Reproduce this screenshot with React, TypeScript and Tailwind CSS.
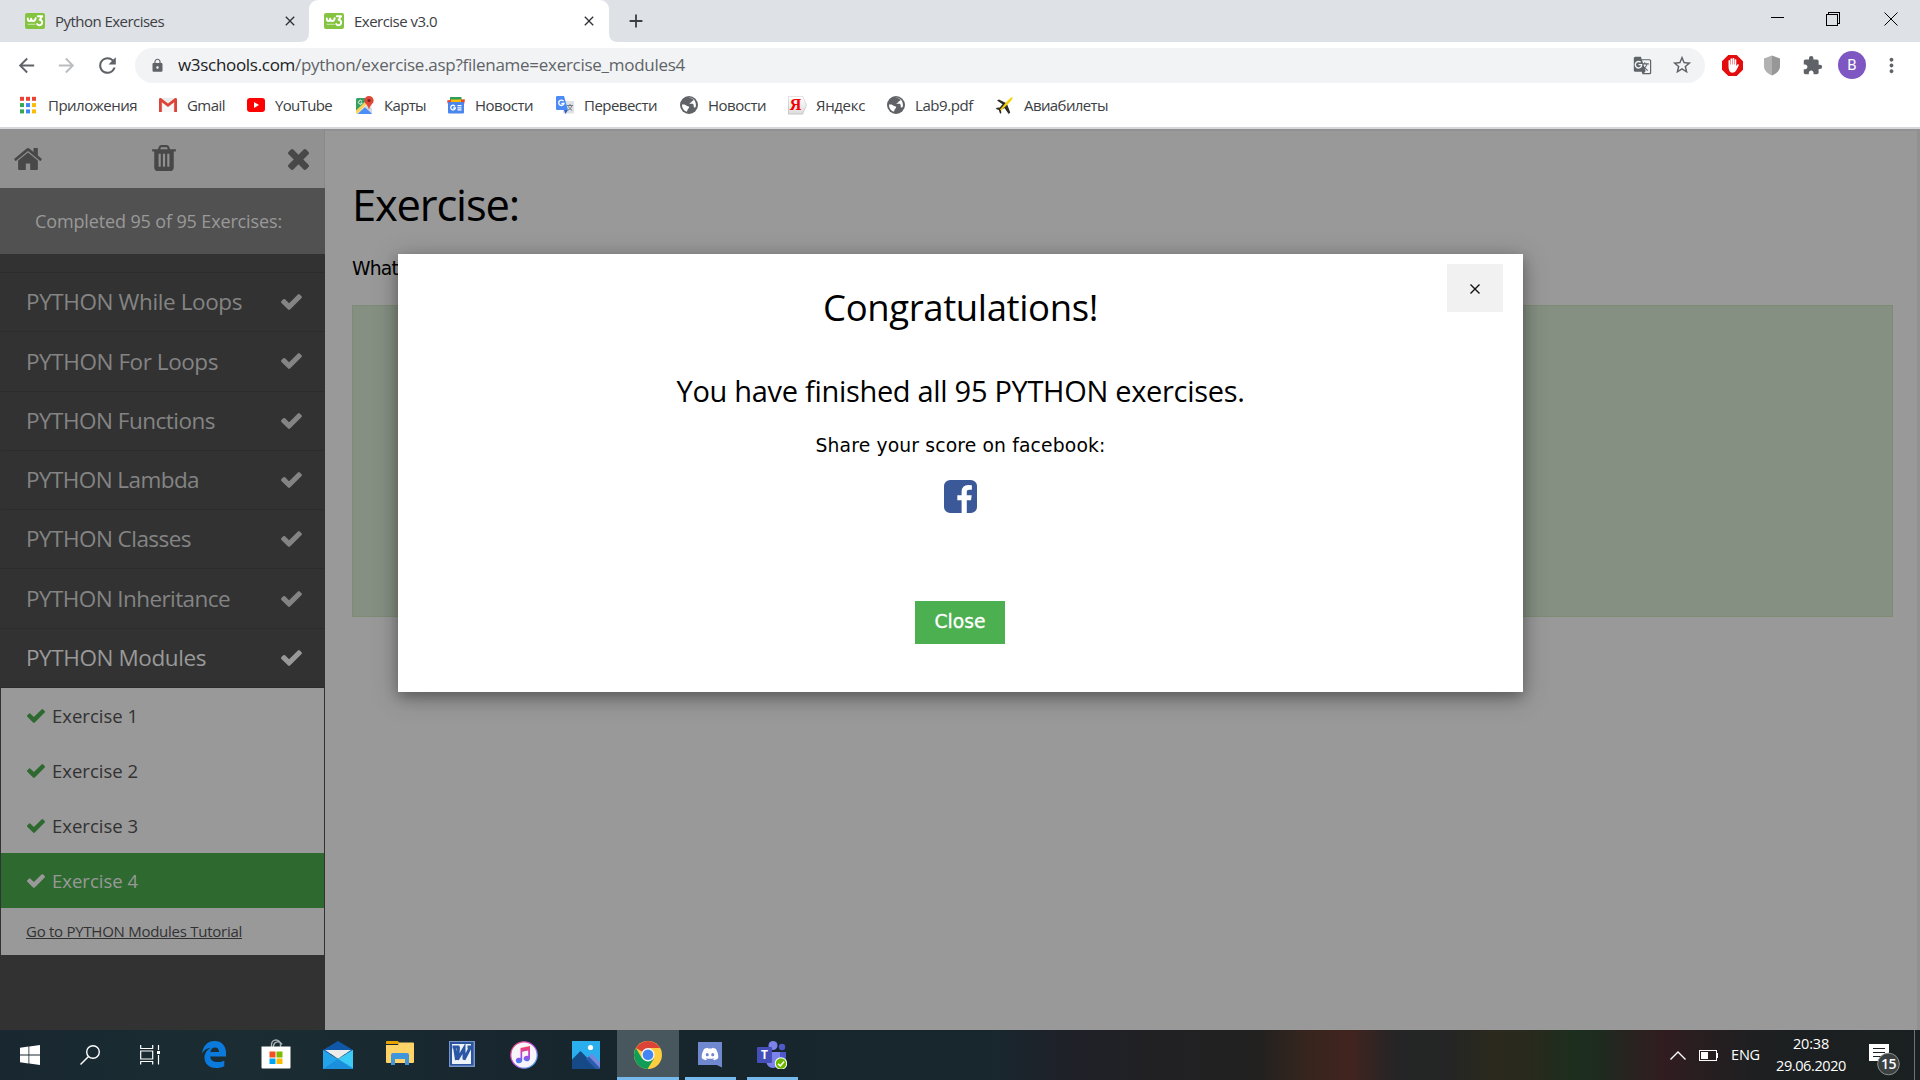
import { useLayoutEffect, useRef, useState, type ReactNode } from "react";
import {
  MdAdd,
  MdArrowBack,
  MdArrowForward,
  MdClose,
  MdExtension,
  MdGTranslate,
  MdLock,
  MdMoreVert,
  MdRefresh,
  MdStarBorder,
} from "react-icons/md";
import { FaDiscord } from "react-icons/fa";

/** One line of text whose letter spacing is adjusted so that it fills `width` pixels. */
function Line({ text, width, className = "" }: { text: string; width: number; className?: string }) {
  const ref = useRef<HTMLSpanElement>(null);
  const [spacing, setSpacing] = useState(0);
  useLayoutEffect(() => {
    if (ref.current) {
      setSpacing((width - ref.current.getBoundingClientRect().width) / text.length);
    }
  }, [text, width]);
  return (
    <span ref={ref} className={`inline-block shrink-0 whitespace-pre ${className}`} style={{ letterSpacing: `${spacing}px` }}>
      {text}
    </span>
  );
}

/* ---------- Glyphs ---------- */

const CheckIcon = ({ className }: { className: string }) => (
  <svg viewBox="121 334 1550 1188" className={className} fill="currentColor">
    <path d="M1671 566q0 40-28 68l-724 724-136 136q-28 28-68 28t-68-28l-136-136-362-362q-28-28-28-68t28-68l136-136q28-28 68-28t68 28l294 295 656-657q28-28 68-28t68 28l136 136q28 28 28 68z" />
  </svg>
);

const HomeIcon = () => (
  <svg viewBox="89 253 1614 1283" className="h-[22px] w-7" fill="currentColor">
    <path d="M1472 992v480q0 26-19 45t-45 19h-384v-384h-256v384h-384q-26 0-45-19t-19-45v-480q0-1 .5-3t.5-3l575-474 575 474q1 2 1 6zm223-69l-62 74q-8 9-21 11h-3q-13 0-21-7l-692-577-692 577q-12 8-24 7-13-2-21-11l-62-74q-8-10-7-23.500t11-21.500l719-599q32-26 76-26t76 26l244 204v-195q0-14 9-23t23-9h192q14 0 23 9t9 23v408l219 182q10 8 11 21.500t-7 23.500z" />
  </svg>
);

const TrashIcon = () => (
  <svg viewBox="192 128 1408 1536" className="mr-[3px] mb-0.5 h-[26px] w-6" fill="currentColor">
    <path d="M704 1376v-704q0-14-9-23t-23-9h-64q-14 0-23 9t-9 23v704q0 14 9 23t23 9h64q14 0 23-9t9-23zm256 0v-704q0-14-9-23t-23-9h-64q-14 0-23 9t-9 23v704q0 14 9 23t23 9h64q14 0 23-9t9-23zm256 0v-704q0-14-9-23t-23-9h-64q-14 0-23 9t-9 23v704q0 14 9 23t23 9h64q14 0 23-9t9-23zm-544-992h448l-48-117q-7-9-17-11h-317q-10 2-17 11zm928 32v64q0 14-9 23t-23 9h-96v948q0 83-47 143.500t-113 60.500h-832q-66 0-113-58.500t-47-141.500v-952h-96q-14 0-23-9t-9-23v-64q0-14 9-23t23-9h309l70-167q15-37 54-63t79-26h320q40 0 79 26t54 63l70 167h309q14 0 23 9t9 23z" />
  </svg>
);

const TimesIcon = () => (
  <svg viewBox="302 366 1188 1188" className="mt-px h-[21px] w-[21px]" fill="currentColor">
    <path d="M1490 1322q0 40-28 68l-136 136q-28 28-68 28t-68-28l-294-294-294 294q-28 28-68 28t-68-28l-136-136q-28-28-28-68t28-68l294-294-294-294q-28-28-28-68t28-68l136-136q28-28 68-28t68 28l294 294 294-294q28-28 68-28t68 28l136 136q28 28 28 68t-28 68l-294 294 294 294q28 28 28 68z" />
  </svg>
);

const FacebookIcon = () => (
  <svg viewBox="128 128 1536 1536" className="h-[33px] w-[33px] text-[#3b5998]" fill="currentColor">
    <path d="M1376 128q119 0 203.500 84.500t84.500 203.500v960q0 119-84.500 203.500t-203.500 84.500h-188v-595h199l30-232h-229v-148q0-56 23.500-84t91.500-28l122-1v-207q-63-9-178-9-136 0-217.500 80t-81.500 226v171h-200v232h200v595h-532q-119 0-203.500-84.500t-84.500-203.500v-960q0-119 84.500-203.500t203.500-84.500h960z" />
  </svg>
);

const W3Favicon = () => (
  <div className="relative h-4 w-5 shrink-0 overflow-hidden rounded-[2px] bg-[#85c440] text-white">
    <svg viewBox="0 0 20 16" className="h-4 w-5" fill="none" stroke="currentColor" strokeWidth="1.9" strokeLinecap="round" strokeLinejoin="round">
      <path d="M2.800 5.500c0 3.400 2.800 3.400 3.300.2.300 3.200 4 3.200 4.600-.6M12.800 3.200h4.400l-2.600 3.600c3.500 0 3.500 5.800-.6 5.400-.9-.1-1.500-.5-1.800-1.100" />
      <path d="M3 11.300h7" strokeWidth="1" opacity="0.600" />
    </svg>
  </div>
);

/* ---------- Bookmark icons ---------- */

const AppsIcon = () => (
  <svg viewBox="0 0 18 18" className="h-[18px] w-[18px]">
    {["#ea4335", "#ea4335", "#ea4335", "#34a853", "#4285f4", "#fbbc05", "#34a853", "#4285f4", "#fbbc05"].map((c, i) => (
      <rect key={i} x={(i % 3) * 6} y={0.800 + Math.floor(i / 3) * 6.300} width="4" height="4" fill={c} />
    ))}
  </svg>
);

const GmailIcon = () => (
  <svg viewBox="0 0 18 14" className="h-3.5 w-[18px]">
    <rect width="18" height="14" rx="1" fill="#ececec" />
    <path d="M3 14V3l6 5 6-5v11" fill="#f7f7f7" stroke="#d0d0d0" strokeWidth=".4" />
    <path d="M0 14V1.500C0 0 1.600-.4 2.500.4L9 5.600 15.500.4C16.400-.4 18 0 18 1.500V14h-2.800V4.300L9 9 2.800 4.300V14z" fill="#db4437" />
  </svg>
);

const YouTubeIcon = () => (
  <svg viewBox="0 0 18 14" className="h-3.5 w-[18px]">
    <rect width="18" height="14" rx="3" fill="#f00" />
    <path d="M7 4l5 3-5 3z" fill="#fff" />
  </svg>
);

const MapsIcon = () => (
  <svg viewBox="0 0 18 18" className="h-[18px] w-[18px]">
    <rect x="0" y="2" width="16" height="16" rx="1.500" fill="#f1f1f1" />
    <path d="M0 3.500Q0 2 1.500 2H14L0 15.500z" fill="#34a062" />
    <path d="M2 17.500L9 11l7 6.500q-.5.500-1.500.500h-13z" fill="#4c8df6" />
    <path d="M0 14.500L12 3l2.500 1L1.500 17.800Q0 17.500 0 16z" fill="#fcd25a" />
    <path d="M9 11l2.500-2.500L16 13v4.500z" fill="#d5d8dc" />
    <path d="M13 0a4.600 4.600 0 0 1 4.600 4.600c0 3.400-3.500 4-4.300 8.400h-.6C12 8.600 8.400 8 8.400 4.600A4.600 4.600 0 0 1 13 0z" fill="#e14638" />
    <circle cx="13" cy="4.500" r="1.600" fill="#7b2019" />
    <path d="M6 5.300A1.900 1.900 0 1 0 6.200 7H4.600" fill="none" stroke="#fff" strokeWidth=".9" />
  </svg>
);

const NewsIcon = () => (
  <svg viewBox="0 0 18 18" className="h-[18px] w-[18px]">
    <path d="M3 1h11.500v7H3z" fill="#2e9e58" />
    <path d="M0 4.500l6-1 2 5H1z" fill="#e94435" />
    <path d="M4 3.500h13.500l-1 6H4z" fill="#fbbc05" />
    <path d="M14 3.500h4l-1 5h-3z" fill="#e94435" />
    <rect x="1" y="6" width="16" height="11.500" rx="1.200" fill="#4a86ee" />
    <path d="M8 10.300A2.300 2.300 0 1 0 8.300 12H6.200M10.500 9.700h4M10.500 11.800h4M10.500 13.900h4" fill="none" stroke="#fff" strokeWidth="1.300" />
  </svg>
);

const TranslateIcon = () => (
  <svg viewBox="0 0 18 18" className="h-[18px] w-[18px]">
    <rect x="7" y="5" width="11" height="12.500" rx="1" fill="#dfe1e5" />
    <path d="M11 9.500h6M14 8v1.500M16 9.500c-.5 2-2 3.600-4 4.600M12.500 10.500c.7 1.600 2 3 3.700 3.800" stroke="#6f7a83" strokeWidth="1" fill="none" />
    <path d="M1.200 0H8l4 14H1.200Q0 14 0 12.800V1.200Q0 0 1.200 0z" fill="#4c8bf5" />
    <path d="M8 14h4l-2.600 4z" fill="#2f5fc4" />
    <path d="M7.600 5.200A2.700 2.700 0 1 0 8 7.500H5.400" fill="none" stroke="#fff" strokeWidth="1.300" />
  </svg>
);

const GlobeIcon = () => (
  <svg viewBox="0 0 18 18" className="h-[18px] w-[18px]">
    <circle cx="9" cy="9" r="9" fill="#5f6368" />
    <path d="M2 8.500c2.500-.3 4 .3 5 1.500 1.300.2 2.600.5 2 2-.8.700-1.500 1-1.500 2.300-.3 1-.9 1.500-1.500 1.300C3.200 14 1.800 11.500 2 8.500z" fill="#fff" />
    <path d="M7 2.500c2.500-1 5-.4 6.500 1.200.3 1.300-1.500 1-2 2-.3 1.200-1.700.8-2 1.800.8.900 3-.3 4 .9.400 1.200-.1 2.200.6 3 .8.500 1.600-.2 1.800-1.400.4-3.500-1.500-7-4.400-8C9.500 1.500 8 1.700 7 2.500z" fill="#fff" />
  </svg>
);

const YandexIcon = () => (
  <div className="flex h-[19px] w-[19px] items-center justify-center bg-[linear-gradient(#e4e4e4,#c4c4c4)] [clip-path:polygon(0_0,78%_0,100%_50%,78%_100%,0_100%)]">
    <div className="flex h-[17px] w-[17px] items-center justify-center bg-[linear-gradient(#ffffff,#dcdcdc)] pr-1 font-['Liberation_Serif',serif] text-[16px] leading-none font-bold text-[#f00000] [clip-path:polygon(0_0,78%_0,100%_50%,78%_100%,0_100%)]">
      Я
    </div>
  </div>
);

const PlaneIcon = () => (
  <svg viewBox="0 0 17 17" className="h-[17px] w-[17px]">
    <path d="M1 3.500l2-1 6.500 3.300 1.700 1.700 3 8-1.500 1.500L8.500 11 5 13l.3 3-1.200.8L2.800 13 0 12l.6-1.200 3.200-.3 2.700-3.300z" fill="#2d2b25" />
    <path d="M16.500.3c.6.900-.6 2.800-3.700 6L5.200 13.500l-1.400-.8 6.900-7.900C13.400 1.600 15.600-.4 16.500.3z" fill="#f6d20c" />
  </svg>
);

/* ---------- Browser chrome ---------- */

function TabStrip() {
  return (
    <div className="flex h-[42px] items-center bg-[#dee1e6] text-[#3c4043]">
      <div className="flex h-full w-[309px] items-center pl-[25px]">
        <W3Favicon />
        <Line text="Python Exercises" width={109} className="ml-2.5 text-[15px]" />
        <MdClose className="ml-[118px] h-4 w-4 text-[#303235]" />
      </div>
      <div className="relative flex h-full w-[300px] items-center rounded-t-[9px] bg-white pl-[15px]">
        <svg viewBox="0 0 9 9" className="absolute bottom-0 -left-[9px] h-[9px] w-[9px]">
          <path d="M9 0v9H0Q9 9 9 0z" fill="#fff" />
        </svg>
        <W3Favicon />
        <Line text="Exercise v3.0" width={83} className="ml-2.5 text-[15px]" />
        <MdClose className="ml-[144px] h-4 w-4 text-[#303235]" />
        <svg viewBox="0 0 9 9" className="absolute -right-[9px] bottom-0 h-[9px] w-[9px]">
          <path d="M0 0v9h9Q0 9 0 0z" fill="#fff" />
        </svg>
      </div>
      <MdAdd className="ml-4 h-[22px] w-[22px] text-[#3c4043]" />
      <div className="ml-auto flex items-center text-black">
        <svg viewBox="0 0 14 14" className="mb-2.5 h-3.5 w-3.5" stroke="currentColor" fill="none" shapeRendering="crispEdges">
          <path d="M.5 8.500h13" />
        </svg>
        <svg viewBox="0 0 14 14" className="mb-1 ml-[42px] h-3.5 w-3.5" stroke="currentColor" fill="none" shapeRendering="crispEdges">
          <path d="M.5 2.500h10.500v11H.5zM2.500 2.500V.5h11v10.500h-2.500" />
        </svg>
        <svg viewBox="0 0 14 14" className="mr-[22px] mb-1 ml-11 h-3.5 w-3.5" stroke="currentColor" fill="none">
          <path d="M.5.5l13 13M13.500.5L.5 13.500" />
        </svg>
      </div>
    </div>
  );
}

function Toolbar() {
  return (
    <div className="flex h-[46px] items-center bg-white text-[#5f6368]">
      <MdArrowBack className="ml-[15px] h-[23px] w-[23px]" />
      <MdArrowForward className="ml-[17px] h-[23px] w-[23px] text-[#bbbdbf]" />
      <MdRefresh className="ml-[17px] h-[25px] w-[25px]" />
      <div className="ml-[15px] flex h-[35px] w-[1570px] items-center rounded-full bg-[#f1f3f4]">
        <MdLock className="ml-[15px] h-[15px] w-[15px]" />
        <Line text="w3schools.com" width={117} className="ml-[13px] text-[17px] text-[#202124]" />
        <Line text="/python/exercise.asp?filename=exercise_modules4" width={390} className="text-[17px]" />
        <MdGTranslate className="ml-auto h-[19px] w-[19px]" />
        <MdStarBorder className="mr-3 ml-[19px] h-[22px] w-[22px]" />
      </div>
      <svg viewBox="0 0 20 20" className="ml-[17px] h-[21px] w-[21px]">
        <path d="M6 0h8l6 6v8l-6 6H6l-6-6V6z" fill="#e30d0d" />
        <path d="M6.200 11V5.200q.8-.8 1.500 0V9h.4V3.600q.8-.9 1.600 0V9h.4V3.200q.9-.8 1.600 0V9h.4V4.400q.8-.7 1.500 0v6l1.200-1.500q1-.4 1.300.6-1.500 3.600-2.900 5.800-1.200 1.500-3.500 1.500-3.500-.2-3.500-5.800z" fill="#fff" />
      </svg>
      <svg viewBox="0 0 16 20" className="ml-[21px] h-[21px] w-4">
        <path d="M8 0L0 3v8c0 4 4 7.500 8 9z" fill="#b1b1b1" />
        <path d="M8 0l8 3v8c0 4-4 7.500-8 9z" fill="#979797" />
      </svg>
      <MdExtension className="ml-[22px] h-[21px] w-[21px]" />
      <div className="ml-[15px] flex h-7 w-7 items-center justify-center rounded-full bg-[#7e57c2] font-['Roboto',sans-serif] text-[15px] text-white">
        B
      </div>
      <MdMoreVert className="ml-[14px] h-[23px] w-[23px]" />
    </div>
  );
}

const bookmarks: { icon: ReactNode; label: string; width: number; cell: string }[] = [
  { icon: <AppsIcon />, label: "Приложения", width: 89, cell: "w-[139px]" },
  { icon: <GmailIcon />, label: "Gmail", width: 38, cell: "w-[88px]" },
  { icon: <YouTubeIcon />, label: "YouTube", width: 57, cell: "w-[109px]" },
  { icon: <MapsIcon />, label: "Карты", width: 42, cell: "w-[91px]" },
  { icon: <NewsIcon />, label: "Новости", width: 58, cell: "w-[109px]" },
  { icon: <TranslateIcon />, label: "Перевести", width: 73, cell: "w-[124px]" },
  { icon: <GlobeIcon />, label: "Новости", width: 58, cell: "w-[108px]" },
  { icon: <YandexIcon />, label: "Яндекс", width: 49, cell: "w-[99px]" },
  { icon: <GlobeIcon />, label: "Lab9.pdf", width: 58, cell: "w-[109px]" },
  { icon: <PlaneIcon />, label: "Авиабилеты", width: 84, cell: "w-[120px]" },
];

function BookmarksBar() {
  return (
    <div className="flex h-[41px] items-center border-b-2 border-[#d5d7da] bg-white pb-[5px] pl-5 text-[#3c4043]">
      {bookmarks.map((b, i) => (
        <div key={i} className={`flex shrink-0 items-center ${b.cell}`}>
          <div className="flex w-7 shrink-0">{b.icon}</div>
          <Line text={b.label} width={b.width} className="text-[15px] leading-5" />
        </div>
      ))}
    </div>
  );
}

/* ---------- Page ---------- */

const chapters = [
  { name: "PYTHON While Loops", width: 216 },
  { name: "PYTHON For Loops", width: 192 },
  { name: "PYTHON Functions", width: 189 },
  { name: "PYTHON Lambda", width: 173 },
  { name: "PYTHON Classes", width: 165 },
  { name: "PYTHON Inheritance", width: 204 },
  { name: "PYTHON Modules", width: 180, open: true },
];

function Sidebar() {
  return (
    <aside className="flex w-[325px] shrink-0 flex-col bg-[#323232]">
      <div className="flex h-[59px] items-center justify-between border-r border-[#8a8a8a] bg-[#919191] pr-[15px] pl-3.5 text-[#484848]">
        <HomeIcon />
        <TrashIcon />
        <TimesIcon />
      </div>
      <div className="flex h-[66px] items-center bg-[#515151] pl-[35px] text-[#999]">
        <Line text="Completed 95 of 95 Exercises:" width={247} className="text-[18px]" />
      </div>
      <div className="mx-px h-[19px] border-b border-[#2c2c2c]" />
      <ul className="mx-px h-[415px]">
        {chapters.map((c) => (
          <li
            key={c.name}
            className={`flex h-[59.286px] items-center justify-between border-b border-[#2c2c2c] pr-[22px] pl-[25px] ${c.open ? "text-[#999]" : "text-[#848484]"}`}
          >
            <Line text={c.name} width={c.width} className="text-[22.5px]" />
            <CheckIcon className="h-4 w-[21px]" />
          </li>
        ))}
      </ul>
      <div className="mx-px bg-[#999] text-[#323232]">
        {[1, 2, 3, 4].map((n) => (
          <div key={n} className={`flex h-[55px] items-center pl-[26px] ${n === 4 ? "bg-[#2e6930] text-[#999]" : ""}`}>
            <CheckIcon className={`h-3.5 w-[18px] ${n === 4 ? "" : "text-[#2e6930]"}`} />
            <Line text={`Exercise ${n}`} width={86} className="ml-[7px] text-[18.5px]" />
          </div>
        ))}
        <div className="flex h-[47px] items-center pl-[25px]">
          <Line text="Go to PYTHON Modules Tutorial" width={216} className="text-[15px] underline" />
        </div>
      </div>
    </aside>
  );
}

function Dialog() {
  return (
    <div className="absolute top-[125px] left-[398px] flex h-[438px] w-[1125px] flex-col items-center bg-white text-black shadow-[0_5px_12px_rgba(0,0,0,0.25),0_5px_25px_rgba(0,0,0,0.25)]">
      <button className="absolute top-2.5 right-5 flex h-12 w-14 items-center justify-center bg-[#f1f1f1]">
        <svg viewBox="0 0 10 10" className="mt-px h-2.5 w-2.5" stroke="#111" strokeWidth="1.400">
          <path d="M.5.5l9 9M9.500.5l-9 9" />
        </svg>
      </button>
      <Line text="Congratulations!" width={275} className="mt-7 text-[36.5px] leading-[50px]" />
      <Line text="You have finished all 95 PYTHON exercises." width={568} className="mt-[39px] text-[29px] leading-10" />
      <Line text="Share your score on facebook:" width={290} className="mt-[21px] font-['DejaVu_Sans',sans-serif] text-[18.75px] leading-7" />
      <div className="mt-5">
        <FacebookIcon />
      </div>
      <button className="mt-[88px] mr-px flex h-[43px] w-[90px] items-center justify-center bg-[#4caf50] text-white">
        <Line text="Close" width={51} className="font-['DejaVu_Sans',sans-serif] text-[18.75px] [-webkit-text-stroke:0.3px_white]" />
      </button>
    </div>
  );
}

function Page() {
  return (
    <div className="relative flex h-[901px] overflow-hidden bg-[#999]">
      <Sidebar />
      <main className="flex grow flex-col items-start border-t-2 border-r-[3px] border-[#919191] pl-[27px]">
        <Line text="Exercise:" width={167} className="mt-[44px] text-[43.5px] leading-[60px] text-black" />
        <Line text="What" width={46} className="mt-5 font-['DejaVu_Sans',sans-serif] text-[18.75px] leading-7 text-black" />
        <div className="mt-[22px] h-[312px] w-[1541px] border border-[#7e8b75] bg-[#858f82]" />
      </main>
      <Dialog />
    </div>
  );
}

/* ---------- Taskbar ---------- */

const taskIcons: { icon: ReactNode; state?: "active" | "running" }[] = [
  {
    icon: (
      <svg viewBox="0 0 24 27" className="h-[27px] w-6">
        <path d="M0 12.500C1 4.500 6 0 12.600 0 19.500 0 24 4.800 24 11.500v4H8.200c.3 4 3.500 5.600 7.300 5.600 2.800 0 5-.6 6.800-1.700v5.500c-2 1.300-5 2.100-8.500 2.100C7 27 2.500 22.500 2.500 16.800c0-4.500 2.500-8 6.500-10C5.500 7 2 9 0 12.500zM8.400 11h8.700c0-2.700-1.400-4.600-4.200-4.600-2.400 0-4.200 1.900-4.500 4.600z" fill="#0a7bdc" />
      </svg>
    ),
  },
  {
    icon: (
      <svg viewBox="0 0 30 30" className="mr-px mb-0.5 h-[30px] w-[30px]">
        <path d="M10.500 9V5.500a4.500 4.500 0 0 1 9 0V9M12.500 9V6.500a4.500 4.500 0 0 1 8.500-1" fill="none" stroke="#a9b0b4" strokeWidth="1.400" />
        <path d="M.5 7.500h29V28.500q0 1-1 1h-27q-1 0-1-1z" fill="#fff" />
        <path d="M8.500 12.500h6v6h-6z" fill="#f25022" />
        <path d="M15.500 12.500h6v6h-6z" fill="#7fba00" />
        <path d="M8.500 19.500h6v5.500h-6z" fill="#00a4ef" />
        <path d="M15.500 19.500h6v5.500h-6z" fill="#ffb900" />
      </svg>
    ),
  },
  {
    icon: (
      <svg viewBox="0 0 30 28" className="h-7 w-[30px]">
        <path d="M0 9L15 0l15 9v4H0z" fill="#0f58a8" />
        <path d="M0 9l15 9L30 9v19H0z" fill="#23a3ea" />
        <path d="M30 9v18L15 18z" fill="#3ccbf4" />
        <path d="M0 28l15-10 15 10z" fill="#1c8fdc" />
        <path d="M2 9h26l-13 8.700z" fill="#ececec" />
      </svg>
    ),
  },
  {
    icon: (
      <svg viewBox="0 0 28 24" className="mb-1 h-6 w-7">
        <path d="M0 1q0-1 1-1h11l2 3H0z" fill="#e8a200" />
        <path d="M13 1.500h14q1 0 1 1V21q0 1-1 1H1q-1 0-1-1V4h12z" fill="#ffd367" />
        <path d="M5 24V14q0-2 2-2h14q2 0 2 2v10h-4v-6H9v6z" fill="#3f96dc" />
      </svg>
    ),
  },
  {
    icon: (
      <svg viewBox="0 0 26 26" className="mb-0.5 h-[26px] w-[26px]">
        <rect width="26" height="26" fill="#7795cb" />
        <rect x="1" y="1" width="23.500" height="23.500" fill="#2c549d" />
        <rect x="3" y="3" width="19" height="20" fill="#eef2f9" />
        <path d="M3.500 6h7M9.500 6L8.500 18.500l6.500-11 0 11L21.500 6M5.500 6l2 13M18.500 6h5" fill="none" stroke="#2b57a5" strokeWidth="3" />
      </svg>
    ),
  },
  {
    icon: (
      <svg viewBox="0 0 28 28" className="h-7 w-7">
        <defs>
          <linearGradient id="ring" x1="0" y1="0" x2="1" y2="1">
            <stop offset="0" stopColor="#ff4d5e" />
            <stop offset=".5" stopColor="#c04df0" />
            <stop offset="1" stopColor="#27c9f7" />
          </linearGradient>
          <linearGradient id="note" x1="0" y1="0" x2="0" y2="1">
            <stop offset="0" stopColor="#fb4457" />
            <stop offset=".55" stopColor="#b83fe0" />
            <stop offset="1" stopColor="#2f8df6" />
          </linearGradient>
        </defs>
        <circle cx="14" cy="14" r="13.200" fill="#f7f5fa" stroke="url(#ring)" strokeWidth="1.200" />
        <path d="M10.500 7L20 5V17.500a3.200 2.800 0 1 1-1.800-2.500V9.500l-6 1.300V19.500a3.200 2.800 0 1 1-1.700-2.500z" fill="url(#note)" />
      </svg>
    ),
  },
  {
    icon: (
      <svg viewBox="0 0 28 28" className="h-7 w-7">
        <rect width="28" height="28" fill="#2aaeee" />
        <path d="M14 18l6-5.500 8 8.500v7H14z" fill="#7389dc" />
        <path d="M0 18.500L8.500 10 26 28H0z" fill="#164a86" />
        <path d="M14 18l3-2.500L28 27v1h-4z" fill="#2c5cb0" />
        <circle cx="18.500" cy="6.500" r="2.600" fill="#fff" />
      </svg>
    ),
  },
  {
    state: "active",
    icon: (
      <svg viewBox="0 0 28 28" className="h-7 w-7">
        <circle cx="14" cy="14" r="14" fill="#ffcd40" />
        <path d="M14 14L1.900 7A14 14 0 0 1 26.100 7H14z" fill="#db4437" />
        <path d="M1.900 7A14 14 0 0 0 13.500 28L20 17.500 8 17.500z" fill="#0f9d58" />
        <circle cx="14" cy="13.700" r="6.700" fill="#f4f4f4" />
        <circle cx="14" cy="13.700" r="5.300" fill="#4285f4" />
      </svg>
    ),
  },
  {
    state: "running",
    icon: (
      <div className="h-[26px] w-6 bg-[#7088d0] [clip-path:polygon(0_0,100%_0,100%_100%,78%_90%,0_90%)]">
        <FaDiscord className="mx-auto mt-[3px] h-[18px] w-[18px] text-white" />
      </div>
    ),
  },
  {
    state: "running",
    icon: (
      <div className="relative h-7 w-[30px]">
        <svg viewBox="0 0 30 28" className="h-7 w-[30px]">
          <circle cx="16" cy="4.500" r="4.500" fill="#7b83eb" />
          <circle cx="25" cy="6" r="3.200" fill="#5059c9" />
          <path d="M20 11h9v9q-2 5-7 4z" fill="#5059c9" />
          <path d="M9 11h14v9q-1 7-7 7t-7-7z" fill="#7b83eb" />
          <rect y="6" width="15" height="16" rx="1" fill="#464eb8" />
          <circle cx="24" cy="22.500" r="6.200" fill="#fff" />
          <circle cx="24" cy="22.500" r="5.200" fill="#6bb700" />
          <path d="M21 22.700l2.200 2.200 4-4.300" fill="none" stroke="#fff" strokeWidth="1.500" />
        </svg>
        <span className="absolute top-[6px] left-0 w-[15px] text-center text-[12px] leading-4 font-bold text-white">T</span>
      </div>
    ),
  },
];

function Taskbar() {
  return (
    <div className="flex h-[50px] bg-[linear-gradient(90deg,#192830_0px,#1b2c33_240px,#17252d_600px,#18272e_990px,#1f2129_1060px,#212124_1150px,#222120_1260px,#36251e_1305px,#42241f_1350px,#2e2424_1380px,#242526_1400px,#242524_1450px,#2b291e_1490px,#29291d_1530px,#1c2f1f_1575px,#1d2c1f_1595px,#25251f_1620px,#311c20_1665px,#2a1e20_1690px,#1d1f21_1760px,#1a2021_1920px)] text-white">
      <div className="flex w-[60px] items-center justify-center">
        <svg viewBox="0 0 20 20" className="h-5 w-5" fill="#fff">
          <path d="M0 2.700L8.500 1.600v8H0zM9.300 1.500L20 0v9.600H9.300zM0 10.400h8.500v8L0 17.300zM9.300 10.400H20V20L9.300 18.500z" />
        </svg>
      </div>
      <div className="flex w-[60px] items-center justify-center">
        <svg viewBox="0 0 20 20" className="h-5 w-5" stroke="#fff" strokeWidth="1.400" fill="none">
          <circle cx="13" cy="7" r="6.300" />
          <path d="M8.500 11.500L.5 19.500" />
        </svg>
      </div>
      <div className="mr-[3px] flex w-[60px] items-center justify-center">
        <svg viewBox="0 0 21 20" className="h-5 w-[21px]" stroke="#fff" strokeWidth="1.200" fill="none">
          <path d="M.7 0v3.500h12V0M.7 6h12v8H.7zM.7 19.500V16.500h12v3M18.500 0v5M18.500 10v9.500" />
          <path d="M17 6h3v3h-3z" fill="#fff" stroke="none" />
        </svg>
      </div>
      {taskIcons.map((t, i) => (
        <div
          key={i}
          className={`flex w-[62px] flex-col items-center justify-between ${t.state === "active" ? "bg-[#48565e]" : ""}`}
        >
          <div className="flex h-[47px] items-center pt-0.5">{t.icon}</div>
          {t.state && <div className={`h-[3px] bg-[#76b9ed] ${t.state === "active" ? "w-full" : "w-[51px]"}`} />}
        </div>
      ))}
      <div className="ml-auto flex items-center">
        <svg viewBox="0 0 16 9" className="h-[9px] w-4" stroke="#fff" strokeWidth="1.400" fill="none">
          <path d="M.5 8.500L8 1l7.500 7.500" />
        </svg>
        <svg viewBox="0 0 19 11" className="ml-[13px] h-[11px] w-[19px]" shapeRendering="crispEdges">
          <path d="M.5.5h17v10H.5z" stroke="#fff" fill="none" />
          <path d="M2 2h7v7H2zM18 3h1v5h-1z" fill="#fff" />
        </svg>
        <Line text="ENG" width={29} className="ml-[13px] text-[14.5px]" />
        <div className="ml-4 flex w-[70px] flex-col items-center text-[14.5px] leading-[22.5px]">
          <Line text="20:38" width={36} />
          <Line text="29.06.2020" width={70} />
        </div>
        <div className="relative ml-[23px] h-[30px] w-[31px]">
          <svg viewBox="0 0 31 30" className="h-[30px] w-[31px] overflow-visible">
            <path d="M0 4h20v17h-5l-4 4v-4H0z" fill="#fff" />
            <path d="M4 8.500h12M4 12.500h12M4 16.500h8" stroke="#1a2021" strokeWidth="1.200" />
            <circle cx="19.500" cy="24" r="10.800" fill="#3b4041" stroke="#8b8f90" />
          </svg>
          <Line text="15" width={15} className="absolute top-[15px] left-3 text-[14px] leading-[18px] font-semibold" />
        </div>
        <div className="mr-[5px] ml-[14px] h-[50px] w-px bg-[#6d7272]" />
      </div>
    </div>
  );
}

export default function App() {
  return (
    <div className="h-[1080px] w-[1920px] overflow-hidden font-['Open_Sans','Noto_Sans',sans-serif]">
      <TabStrip />
      <Toolbar />
      <BookmarksBar />
      <Page />
      <Taskbar />
    </div>
  );
}
